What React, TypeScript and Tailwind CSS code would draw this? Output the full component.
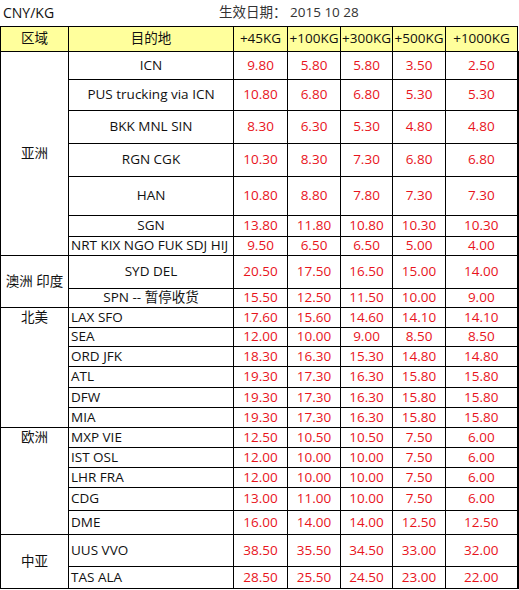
import React from 'react'

type Row = {
  dest: string
  prices: string[]
  h: string
  left?: boolean
}

type Group = {
  region: string
  top?: boolean
  rows: Row[]
}

const HEADERS = ['+45KG', '+100KG', '+300KG', '+500KG', '+1000KG']

const GROUPS: Group[] = [
  {
    region: '亚洲',
    rows: [
      { dest: 'ICN', prices: ['9.80', '5.80', '5.80', '3.50', '2.50'], h: 'h-[28px]' },
      { dest: 'PUS trucking via ICN', prices: ['10.80', '6.80', '6.80', '5.30', '5.30'], h: 'h-[31px]' },
      { dest: 'BKK MNL SIN', prices: ['8.30', '6.30', '5.30', '4.80', '4.80'], h: 'h-[33px]' },
      { dest: 'RGN CGK', prices: ['10.30', '8.30', '7.30', '6.80', '6.80'], h: 'h-[33px]' },
      { dest: 'HAN', prices: ['10.80', '8.80', '7.80', '7.30', '7.30'], h: 'h-[39px]' },
      { dest: 'SGN', prices: ['13.80', '11.80', '10.80', '10.30', '10.30'], h: 'h-[21px]' },
      { dest: 'NRT KIX NGO FUK SDJ HIJ', prices: ['9.50', '6.50', '6.50', '5.00', '4.00'], h: 'h-[19px]', left: true },
    ],
  },
  {
    region: '澳洲 印度',
    rows: [
      { dest: 'SYD DEL', prices: ['20.50', '17.50', '16.50', '15.00', '14.00'], h: 'h-[33px]' },
      { dest: 'SPN -- 暂停收货', prices: ['15.50', '12.50', '11.50', '10.00', '9.00'], h: 'h-[19px]' },
    ],
  },
  {
    region: '北美',
    top: true,
    rows: [
      { dest: 'LAX SFO', prices: ['17.60', '15.60', '14.60', '14.10', '14.10'], h: 'h-[20px]', left: true },
      { dest: 'SEA', prices: ['12.00', '10.00', '9.00', '8.50', '8.50'], h: 'h-[19px]', left: true },
      { dest: 'ORD JFK', prices: ['18.30', '16.30', '15.30', '14.80', '14.80'], h: 'h-[20px]', left: true },
      { dest: 'ATL', prices: ['19.30', '17.30', '16.30', '15.80', '15.80'], h: 'h-[21px]', left: true },
      { dest: 'DFW', prices: ['19.30', '17.30', '16.30', '15.80', '15.80'], h: 'h-[20px]', left: true },
      { dest: 'MIA', prices: ['19.30', '17.30', '16.30', '15.80', '15.80'], h: 'h-[20px]', left: true },
    ],
  },
  {
    region: '欧洲',
    top: true,
    rows: [
      { dest: 'MXP VIE', prices: ['12.50', '10.50', '10.50', '7.50', '6.00'], h: 'h-[20px]', left: true },
      { dest: 'IST OSL', prices: ['12.00', '10.00', '10.00', '7.50', '6.00'], h: 'h-[20px]', left: true },
      { dest: 'LHR FRA', prices: ['12.00', '10.00', '10.00', '7.50', '6.00'], h: 'h-[20px]', left: true },
      { dest: 'CDG', prices: ['13.00', '11.00', '10.00', '7.50', '6.00'], h: 'h-[23px]', left: true },
      { dest: 'DME', prices: ['16.00', '14.00', '14.00', '12.50', '12.50'], h: 'h-[24px]', left: true },
    ],
  },
  {
    region: '中亚',
    rows: [
      { dest: 'UUS VVO', prices: ['38.50', '35.50', '34.50', '33.00', '32.00'], h: 'h-[32px]', left: true },
      { dest: 'TAS ALA', prices: ['28.50', '25.50', '24.50', '23.00', '22.00'], h: 'h-[22px]', left: true },
    ],
  },
]

export default function App() {
  return (
    <div className="w-[519px] h-[590px] bg-white text-[13.5px] text-[#111] font-['Open_Sans','Noto_Sans_CJK_SC',sans-serif] leading-none">
      <div className="flex h-[26px] items-center">
        <span className="pl-[3px] text-[14px] w-[219px]">CNY/KG</span>
        <span className="text-[13.5px] text-[#333]">生效日期： 2015 10 28</span>
      </div>

      <table className="table-fixed border-collapse w-[517px]">
        <colgroup>
          <col className="w-[68px]" />
          <col className="w-[165px]" />
          <col className="w-[54px]" />
          <col className="w-[53px]" />
          <col className="w-[52px]" />
          <col className="w-[53px]" />
          <col className="w-[72px]" />
        </colgroup>
        <thead>
          <tr className="h-[25px] bg-[#ffff9c]">
            <th className="border border-black font-normal text-center">区域</th>
            <th className="border border-black font-normal text-center">目的地</th>
            {HEADERS.map((h) => (
              <th key={h} className="border border-black font-normal text-center px-0 whitespace-nowrap">
                {h}
              </th>
            ))}
          </tr>
        </thead>
        <tbody>
          {GROUPS.map((g) =>
            g.rows.map((r, i) => (
              <tr key={g.region + r.dest} className={r.h}>
                {i === 0 && (
                  <td
                    rowSpan={g.rows.length}
                    className={`border border-black text-center ${g.top ? 'align-top pt-[3px]' : 'align-middle'}`}
                  >
                    {g.region}
                  </td>
                )}
                <td
                  className={`border border-black whitespace-nowrap overflow-hidden ${
                    r.left ? 'text-left pl-[2px]' : 'text-center'
                  }`}
                >
                  {r.dest}
                </td>
                {r.prices.map((p, j) => (
                  <td
                    key={j}
                    className={`border border-black text-center text-[#e8141c] ${j === 4 ? 'border-r-2' : ''}`}
                  >
                    {p}
                  </td>
                ))}
              </tr>
            ))
          )}
        </tbody>
      </table>
    </div>
  )
}
